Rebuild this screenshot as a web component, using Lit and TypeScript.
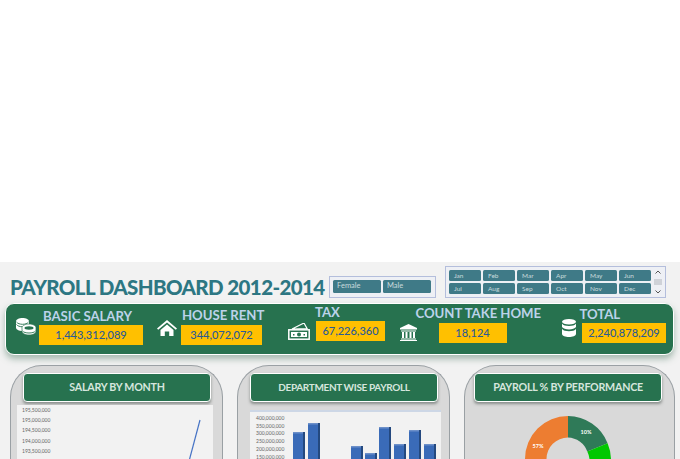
import { LitElement, html, css, svg } from "lit";
import { customElement } from "lit/decorators.js";

const MONTHS = ["Jan", "Feb", "Mar", "Apr", "May", "Jun", "Jul", "Aug", "Sep", "Oct", "Nov", "Dec"];
const SAL = ["195,500,000", "195,000,000", "194,500,000", "194,000,000", "193,500,000"];
const DEP = ["400,000,000", "350,000,000", "300,000,000", "250,000,000", "200,000,000", "150,000,000"];
// [gap before the bar, bar top below the plot's top]
const BARS = [
  [0, 20], [3, 11], [31, 34], [2, 41], [2, 15], [3, 32], [3, 18], [3, 32],
];

const coins = svg`<svg viewBox="0 0 20 17" width="20" height="17">
  <path d="M0 3.500C0 1.500 3 0 6.500 0S13 1.500 13 3.500V10L9 13H6.500C3 13 0 11.500 0 9.500z" fill="#fff"/>
  <path d="M.5 6.500c1 1.500 3.500 2.300 6 2.300M.5 4c1 1.500 3.500 2.300 6 2.300s5-.8 6-2.300" fill="none" stroke="#27724f" stroke-width=".9"/>
  <path d="M6 9.500C6 7.500 9.500 6 13 6s7 1.500 7 3.500v4c0 2-3.500 3.500-7 3.500s-7-1.500-7-3.500z" fill="#fff" stroke="#27724f" stroke-width=".7"/>
  <ellipse cx="13" cy="10" rx="4.500" ry="1.700" fill="#27724f"/>
  <path d="M6.500 13c1 1.300 3.500 2 6.500 2s5.500-.7 6.500-2" fill="none" stroke="#27724f" stroke-width=".9"/></svg>`;
const house = svg`<svg viewBox="0 0 20 16" width="20" height="16" fill="#fff"><path d="M10 0 0 8.500l1.200 1.300L10 2.600l8.800 7.200L20 8.500zM3.500 10 10 4.600l6.500 5.400V16h-4.300v-4.500H7.800V16H3.500z"/></svg>`;
const cash = svg`<svg viewBox="0 0 22 17" width="22" height="17"><path d="M4 6 16 0l3 5.500z" fill="none" stroke="#fff" stroke-width="1.200"/><rect x=".8" y="6.800" width="20.400" height="9.400" fill="#27724f" stroke="#fff" stroke-width="1.500"/><rect x="3" y="9" width="16" height="5" fill="#fff"/><circle cx="11" cy="11.500" r="2" fill="#27724f"/><rect x="5" y="11" width="1.500" height="1.500" fill="#27724f"/><rect x="15.500" y="11" width="1.500" height="1.500" fill="#27724f"/></svg>`;
const bank = svg`<svg viewBox="0 0 17 17" width="17" height="17" fill="#fff"><path d="M8.500 0 0 4v1.500h17V4zM1 6.500h15V7.500H1zM2 8h2v6H2zM5.500 8h2v6h-2zM9.500 8h2v6h-2zM13 8h2v6h-2zM1 14.500h15v1H1zM0 16h17v1H0z"/></svg>`;
const db = svg`<svg viewBox="0 0 14 18" width="14" height="18" fill="#fff"><ellipse cx="7" cy="2.800" rx="7" ry="2.800"/><path d="M0 4.500C1 6.300 4 7 7 7s6-.7 7-2.500V8c-1 1.700-4 2.400-7 2.400S1 9.700 0 8zM0 9.700c1 1.800 4 2.500 7 2.500s6-.7 7-2.500v5.300c0 1.700-3.500 3-7 3s-7-1.300-7-3z"/></svg>`;

const KPIS = [
  { cls: "k1", icon: coins, label: "BASIC SALARY", value: "1,443,312,089" },
  { cls: "k2", icon: house, label: "HOUSE RENT", value: "344,072,072" },
  { cls: "k3", icon: cash, label: "TAX", value: "67,226,360" },
  { cls: "k4", icon: bank, label: "COUNT TAKE HOME", value: "18,124" },
  { cls: "k5", icon: db, label: "TOTAL", value: "2,240,878,209" },
];

@customElement("app-root")
export class AppRoot extends LitElement {
  static styles = css`
    :host { display: block; width: 680px; height: 459px; overflow: hidden; background: #fff; font-family: "Lato", "Open Sans", sans-serif; }
    .page { margin-top: 262px; height: 197px; background: #f2f2f2; padding: 4px 5px 0 5px; box-sizing: border-box; overflow: hidden; }

    .top { display: flex; align-items: flex-end; height: 32px; }
    h1 { margin: 0 0 -2px 5px; width: 319px; font-size: 20.500px; line-height: 26px; font-weight: 900; color: #2d7783; white-space: nowrap; letter-spacing: -.6px; }
    .slicer { border: 1px solid #b4bedc; background: #eef0f5; box-sizing: border-box; padding: 3px; display: grid; gap: 2px; }
    .gender { width: 107px; height: 22px; grid-template-columns: 48px 48px; margin-right: 9px; }
    .months { width: 221px; height: 32px; grid-template-columns: repeat(6, 32px) 10px; grid-auto-rows: 11px; column-gap: 2px; row-gap: 2px; }
    .btn { background: #3f7a87; color: #c9dadd; font-size: 7.500px; line-height: 12px; padding-left: 4px; border-radius: 1.500px; height: 13px; }
    .months .btn { height: 11px; line-height: 11px; font-size: 6.500px; padding-left: 5px; }
    .scroll { display: flex; flex-direction: column; align-items: center; justify-content: space-between; }
    .scroll i { display: block; width: 8px; height: 6px; background: #cfd2d8; }
    .scroll svg { display: block; }

    .bar { margin-top: 5px; width: 669px; height: 52px; box-sizing: border-box; border: 1.500px solid #fff; border-radius: 9px; background: #27724f; box-shadow: 0 4px 6px rgba(90, 130, 110, .5); display: grid; grid-template-columns: 145px 127px 122px 160px 1fr; }
    .kpi { display: flex; align-items: flex-end; box-sizing: border-box; }
    .kpi .col { display: flex; flex-direction: column; }
    .label { color: #bcd3ea; font-weight: 700; font-size: 13.200px; line-height: 15px; letter-spacing: -.05px; white-space: nowrap; }
    .value { background: #ffc000; color: #2a5a96; font-size: 11px; font-weight: 500; height: 20px; line-height: 20px; text-align: center; box-sizing: border-box; }
    .ico { display: block; flex: none; }
    .k1 { padding: 0 0 9px 10px; } .k1 .ico { margin: 0 3px 7px 0; } .k1 .value { width: 104px; } .k1 .label { margin: 0 0 1px 4px; }
    .k2 { padding: 0 0 9.500px 6px; } .k2 .ico { margin: 0 4px 6px 0; } .k2 .value { width: 81px; } .k2 .label { margin: 0 0 2px 1px; }
    .k3 { padding: 0 0 13px 10px; } .k3 .ico { margin: 0 6px -2px 0; } .k3 .value { width: 69px; } .k3 .label { margin: 0 0 1px -1px; }
    .k4 { padding: 0 0 11.500px 0; } .k4 .ico { margin: 0 0 -1.500px 0; } .k4 .value { width: 68px; margin-left: 21.500px; } .k4 .label { margin: 0 0 2px -1.500px; }
    .k5 { padding: 0 0 11.500px 2px; } .k5 .ico { margin: 0 6px 3px 0; } .k5 .value { width: 84px; } .k5 .label { margin: 0 0 1px -2.500px; }

    .cards { display: grid; grid-template-columns: 213px 213px 211px; column-gap: 14px; margin: 10px 0 0 5px; }
    .card { height: 130px; box-sizing: border-box; border: 1px solid #9aa0a4; border-bottom: 0; border-radius: 32px 32px 0 0; background: #d9d9d9; position: relative; padding-top: 7px; }
    .head { height: 29px; width: 188px; box-sizing: border-box; border: 1.500px solid #fff; border-radius: 4px; background: #27724f; color: #d6e6dd; font-size: 10.700px; font-weight: 700; line-height: 26px; letter-spacing: -.25px; text-align: center; white-space: nowrap; box-shadow: 0 2px 3px rgba(70, 80, 75, .55); }
    .h1 { margin-left: 12px; }
    .h2 { margin-left: 12px; font-size: 10px; letter-spacing: -.35px; }
    .h3 { margin-left: 9px; }
    .plot { position: absolute; background: #f2f2f2; top: 39px; bottom: 0; }
    .axis { position: absolute; font-size: 5px; color: #666; line-height: 10.200px; white-space: nowrap; }
    .p1 { left: 6px; width: 196px; }
    .p1 .axis { left: 5px; top: 0; }
    .line { position: absolute; left: 0; top: 0; }
    .p2 { left: 12px; width: 191px; top: 44px; border-top: 2px solid #cdd7e6; }
    .p2 .axis { left: 6px; top: 3px; line-height: 7.700px; }
    .bars { position: absolute; left: 43px; top: 0; bottom: 0; display: flex; }
    .b { width: 12px; flex: none; background: #3a6bb8; box-shadow: inset -2px 0 0 #24497f, inset 0 1.500px 0 #6d90c9; }
    .donut { position: absolute; left: 59px; top: 49px; display: block; }
    text { font-family: "Lato", sans-serif; font-size: 5.500px; font-weight: 700; fill: #fff; }
  `;

  render() {
    return html`<div class="page">
      <div class="top">
        <h1>PAYROLL DASHBOARD 2012-2014</h1>
        <div class="slicer gender"><div class="btn">Female</div><div class="btn">Male</div></div>
        <div class="slicer months">
          ${MONTHS.map((m) => html`<div class="btn">${m}</div>`)}
          <div class="scroll" style="grid-row:1/span 2;grid-column:7">
            <svg viewBox="0 0 6 4" width="6" height="4"><path d="M.5 3.500 3 1l2.500 2.500" fill="none" stroke="#555"/></svg>
            <i></i>
            <svg viewBox="0 0 6 4" width="6" height="4"><path d="M.5 .5 3 3 5.500 .5" fill="none" stroke="#555"/></svg>
          </div>
        </div>
      </div>
      <div class="bar">
        ${KPIS.map((k) => html`<div class="kpi ${k.cls}">
          <div class="ico">${k.icon}</div>
          <div class="col"><div class="label">${k.label}</div><div class="value">${k.value}</div></div>
        </div>`)}
      </div>
      <div class="cards">
        <div class="card">
          <div class="head h1">SALARY BY MONTH</div>
          <div class="plot p1">
            <div class="axis">${SAL.map((s) => html`<div>${s}</div>`)}</div>
            <svg class="line" width="196" height="60"><path d="M183 15 171 60" fill="none" stroke="#4472c4" stroke-width="1.200"/></svg>
          </div>
        </div>
        <div class="card">
          <div class="head h2">DEPARTMENT WISE PAYROLL</div>
          <div class="plot p2">
            <div class="axis">${DEP.map((s) => html`<div>${s}</div>`)}</div>
            <div class="bars">
              ${BARS.map(([g, t]) => html`<div class="b" style="margin-left:${g}px;margin-top:${t}px"></div>`)}
            </div>
          </div>
        </div>
        <div class="card">
          <div class="head h3">PAYROLL % BY PERFORMANCE</div>
          <svg class="donut" width="90" height="50" viewBox="0 0 90 50">
            <path d="M44 1A43 43 0 0 1 83.600 28.200L63.300 36.400A21.500 21.500 0 0 0 44 22.500Z" fill="#2f7a58"/>
            <path d="M83.600 28.200A43 43 0 0 1 87 44H65.500A21.500 21.500 0 0 0 63.300 36.400Z" fill="#00c800"/>
            <path d="M44 1A43 43 0 0 0 1 44V50H22.500V44A21.500 21.500 0 0 1 44 22.500Z" fill="#ed7d31"/>
            <path d="M87 44V50H65.500V44Z" fill="#00c800"/>
            <text x="62" y="19" text-anchor="middle">10%</text>
            <text x="14" y="33" text-anchor="middle">57%</text>
          </svg>
        </div>
      </div>
    </div>`;
  }
}
